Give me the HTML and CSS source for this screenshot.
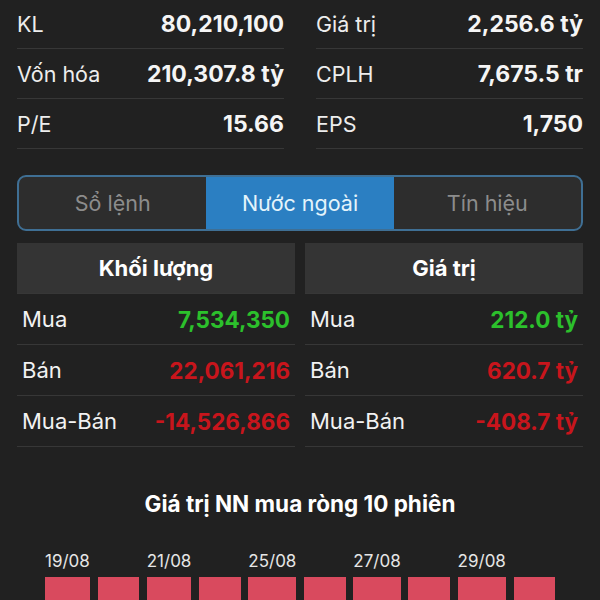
FILE: index.html
```html
<!DOCTYPE html>
<html lang="vi">
<head>
<meta charset="utf-8">
<title>Nước ngoài</title>
<link rel="stylesheet" href="styles.css">
</head>
<body>
<div class="page">
  <section class="stats">
    <div class="stat-col">
      <div class="stat-row"><span class="stat-label">KL</span><span class="stat-value">80,210,100</span></div>
      <div class="stat-row"><span class="stat-label">Vốn hóa</span><span class="stat-value">210,307.8 tỷ</span></div>
      <div class="stat-row"><span class="stat-label">P/E</span><span class="stat-value">15.66</span></div>
    </div>
    <div class="stat-col">
      <div class="stat-row"><span class="stat-label">Giá trị</span><span class="stat-value">2,256.6 tỷ</span></div>
      <div class="stat-row"><span class="stat-label">CPLH</span><span class="stat-value">7,675.5 tr</span></div>
      <div class="stat-row"><span class="stat-label">EPS</span><span class="stat-value">1,750</span></div>
    </div>
  </section>

  <nav class="tabs">
    <div class="tab">Sổ lệnh</div>
    <div class="tab active">Nước ngoài</div>
    <div class="tab">Tín hiệu</div>
  </nav>

  <section class="foreign">
    <div class="panel">
      <div class="panel-head">Khối lượng</div>
      <div class="panel-body">
        <div class="data-row"><span class="data-label">Mua</span><span class="data-value up">7,534,350</span></div>
        <div class="data-row"><span class="data-label">Bán</span><span class="data-value down">22,061,216</span></div>
        <div class="data-row"><span class="data-label">Mua-Bán</span><span class="data-value down">-14,526,866</span></div>
      </div>
    </div>
    <div class="panel">
      <div class="panel-head">Giá trị</div>
      <div class="panel-body">
        <div class="data-row"><span class="data-label">Mua</span><span class="data-value up">212.0 tỷ</span></div>
        <div class="data-row"><span class="data-label">Bán</span><span class="data-value down">620.7 tỷ</span></div>
        <div class="data-row"><span class="data-label">Mua-Bán</span><span class="data-value down">-408.7 tỷ</span></div>
      </div>
    </div>
  </section>

  <section class="chart">
    <h2 class="chart-title">Giá trị NN mua ròng 10 phiên</h2>
    <div class="bars">
      <div class="bar-col"><span class="bar-date">19/08</span><div class="bar"></div></div>
      <div class="bar-col"><span class="bar-date"></span><div class="bar"></div></div>
      <div class="bar-col"><span class="bar-date">21/08</span><div class="bar"></div></div>
      <div class="bar-col"><span class="bar-date"></span><div class="bar"></div></div>
      <div class="bar-col"><span class="bar-date">25/08</span><div class="bar"></div></div>
      <div class="bar-col"><span class="bar-date"></span><div class="bar"></div></div>
      <div class="bar-col"><span class="bar-date">27/08</span><div class="bar"></div></div>
      <div class="bar-col"><span class="bar-date"></span><div class="bar"></div></div>
      <div class="bar-col"><span class="bar-date">29/08</span><div class="bar"></div></div>
      <div class="bar-col"><span class="bar-date"></span><div class="bar"></div></div>
    </div>
  </section>
</div>
</body>
</html>
```

FILE: styles.css
```css
* { box-sizing: border-box; }

html, body {
  margin: 0;
  padding: 0;
  background: #212121;
  height: 600px;
  overflow: hidden;
}

body {
  font-family: Inter, "Noto Sans", "DejaVu Sans", sans-serif;
  color: #f2f2f2;
}

.page {
  padding: 0 17px;
}

/* Top stats */
.stats {
  display: grid;
  grid-template-columns: 1fr 1fr;
  column-gap: 32px;
  margin-top: -1px;
}

.stat-row {
  display: flex;
  justify-content: space-between;
  align-items: center;
  height: 50px;
  border-bottom: 1px solid #373737;
}

.stat-label {
  font-size: 21.5px;
  font-weight: 400;
  color: #ededed;
}

.stat-value {
  font-size: 23px;
  font-weight: 700;
  color: #f5f5f5;
}

/* Segmented tabs */
.tabs {
  display: grid;
  grid-template-columns: 1fr 1fr 1fr;
  margin-top: 26px;
  height: 56px;
  border: 2px solid #3f6f94;
  border-radius: 9px;
  overflow: hidden;
  background: #2d2d2d;
}

.tab {
  display: flex;
  align-items: center;
  justify-content: center;
  font-size: 21.5px;
  color: #8c8c8c;
}

.tab.active {
  background: #2b7fc2;
  color: #e4f4fb;
}

/* Foreign trading panels */
.foreign {
  display: grid;
  grid-template-columns: 1fr 1fr;
  column-gap: 10px;
  margin-top: 12px;
}

.panel-head {
  display: flex;
  align-items: center;
  justify-content: center;
  height: 50px;
  background: #343434;
  font-size: 22px;
  font-weight: 700;
  color: #ffffff;
}

.panel-body {
  border-top: 1px solid #373737;
}

.data-row {
  display: flex;
  justify-content: space-between;
  align-items: center;
  height: 51px;
  padding: 0 5px;
  border-bottom: 1px solid #373737;
}

.data-label {
  font-size: 22px;
  color: #f2f2f2;
}

.data-value {
  font-size: 22.5px;
  font-weight: 700;
}

.data-value.up { color: #2cc02c; }
.data-value.down { color: #c8151c; }

/* Chart */
.chart {
  margin-top: 42px;
}

.chart-title {
  margin: 0;
  text-align: center;
  font-size: 22.5px;
  line-height: 30px;
  font-weight: 700;
  color: #ffffff;
}

.bars {
  display: grid;
  grid-template-columns: repeat(10, 1fr);
  column-gap: 7.8px;
  width: 510px;
  margin: 31px 0 0 28px;
}

.bar-col {
  display: flex;
  flex-direction: column;
  align-items: center;
}

.bar-date {
  height: 22px;
  line-height: 22px;
  font-size: 17px;
  color: #e6e6e6;
  white-space: nowrap;
}

.bar {
  width: 100%;
  height: 60px;
  margin-top: 5px;
  background: #d94a5e;
}
```
